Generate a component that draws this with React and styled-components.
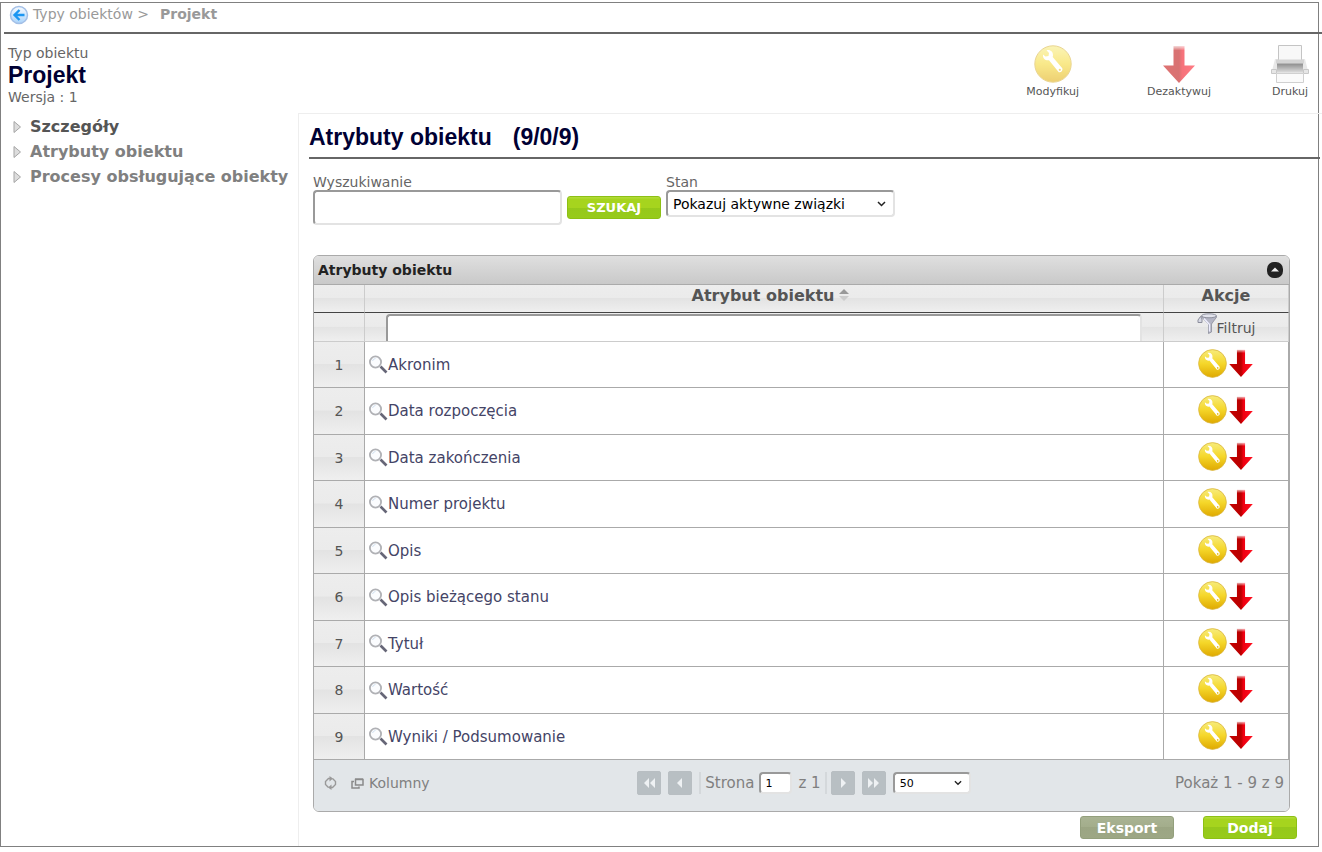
import React, { useState } from 'react'
import styled, { createGlobalStyle } from 'styled-components'

const GlobalStyle = createGlobalStyle`
  * {
    box-sizing: border-box;
  }
  body {
    margin: 0;
    overflow-x: hidden;
    background-color: #fff;
    color: #666;
    font-family: "DejaVu Sans", Verdana, sans-serif;
    font-size: 14px;
  }
  button,
  input,
  select {
    font-family: inherit;
  }
`

const Frame = styled.div`
  margin: 2px 3px 5px 0;
  border: 1px solid #808080;
`

const Breadcrumb = styled.nav`
  display: flex;
  align-items: center;
  height: 31px;
  margin: 0 -4px 0 3px;
  padding: 0 5px 8px;
  border-bottom: 2px solid #666;
  color: #999;
`

const CrumbLink = styled.a`
  display: flex;
  align-items: center;
  gap: 4px;
  color: inherit;
  text-decoration: none;

  svg {
    margin-top: 3px;
  }
`

const Current = styled.strong`
  margin-left: 11px;
`

const Header = styled.header`
  display: flex;
  justify-content: space-between;
  height: 79px;
  padding: 10px 9px 0 7px;
`

const ObjectInfo = styled.div`
  line-height: 18px;
`

const ObjectName = styled.h1`
  margin: 0;
  color: #003;
  font: bold 23px/26px "Liberation Sans", Arial, sans-serif;
`

const Toolbar = styled.div`
  display: flex;
  align-items: flex-start;
`

const Tool = styled.button`
  display: flex;
  flex-direction: column;
  align-items: center;
  gap: 2px;
  margin-left: ${({ $gap }) => $gap || 0}px;
  padding: 1px 0 0;
  border: none;
  background: none;
  color: #555;
  font-size: 11px;
  line-height: 14px;
  cursor: pointer;

  svg {
    opacity: ${({ $faded }) => ($faded ? 0.55 : 1)};
  }
`

const Columns = styled.div`
  display: flex;
`

const Menu = styled.nav`
  flex: 0 0 297px;
  padding-top: 1px;
`

const MenuLink = styled.a`
  display: flex;
  align-items: center;
  gap: 8px;
  height: 25px;
  padding-left: 11px;
  color: ${({ $active }) => ($active ? '#555' : '#808080')};
  font-size: 16px;
  font-weight: bold;
  text-decoration: none;
  white-space: nowrap;
`

const Main = styled.main`
  flex: 1;
  min-width: 0;
  margin-right: -4px;
  padding: 0 2px 7px 10px;
  border-top: 1px solid #eee;
  border-left: 1px solid #eee;
`

const Title = styled.h2`
  display: flex;
  gap: 21px;
  margin: 0;
  padding: 10px 0 6px;
  border-bottom: 2px solid #666;
  color: #003;
  font: bold 23px/27px "Liberation Sans", Arial, sans-serif;
`

const Content = styled.div`
  padding: 15px 30px 0 4px;
`

const SearchForm = styled.form`
  display: flex;
  gap: 5px;
  align-items: flex-start;
`

const Field = styled.label`
  display: flex;
  flex-direction: column;
  width: ${({ $width }) => $width}px;
  line-height: 16px;
`

const inset = `
  border: 2px solid;
  border-color: #999 #e3e3e3 #e3e3e3 #999;
  border-radius: 4px;
  background-color: #fff;
  color: #000;
`

const TextInput = styled.input`
  ${inset}
  height: 35px;
  padding: 0 6px;
  font-size: 14px;
`

const SelectBox = styled.span`
  display: inline-grid;
  align-items: center;

  select,
  svg {
    grid-area: 1 / 1;
  }
  svg {
    justify-self: end;
    margin-right: 9px;
    pointer-events: none;
  }
`

const Select = styled.select`
  ${inset}
  appearance: none;
  width: ${({ $width }) => $width};
  height: ${({ $height }) => $height}px;
  padding: 0 5px;
  font-size: ${({ $size }) => $size}px;
`

const Button = styled.button`
  width: 94px;
  height: 23px;
  padding: 0;
  border: 1px solid ${({ $grey }) => ($grey ? '#939f7c' : '#8dc015')};
  border-radius: 3px;
  background: ${({ $grey }) =>
    $grey
      ? 'linear-gradient(#a9b393, #a3ad8b 50%, #9ba583 50%, #9da785)'
      : 'linear-gradient(#b3dc3c, #a6d41e 12%, #a6d41e 50%, #95c81b 50%, #97cb1a)'};
  color: #fff;
  font-size: ${({ $small }) => ($small ? 13 : 14)}px;
  font-weight: bold;
  line-height: 20px;
  cursor: pointer;
`

const SearchButton = styled(Button)`
  margin-top: 22px;
`

const Grid = styled.section`
  margin-top: 30px;
  border: 1px solid #aaa;
  border-radius: 6px;
  overflow: hidden;
`

const GridTitle = styled.div`
  display: flex;
  align-items: center;
  justify-content: space-between;
  height: 29px;
  padding: 0 6px 0 4px;
  border-bottom: 1px solid #aaa;
  background: linear-gradient(#dfdfdf, #c9c9c9);
  color: #222;
  font-weight: bold;
`

const IconButton = styled.button`
  display: flex;
  align-items: center;
  gap: 5px;
  padding: 0;
  border: none;
  background: none;
  color: inherit;
  font-size: inherit;
  cursor: pointer;
`

const Table = styled.table`
  width: 100%;
  table-layout: fixed;
  border-collapse: separate;
  border-spacing: 0;
`

const shade = 'linear-gradient(#ededed, #ebebeb 48%, #e3e3e3 50%, #efefef)'

const HeadCell = styled.th`
  width: ${({ $width }) => $width || 'auto'};
  height: 28px;
  padding: 0 0 6px ${({ $sortable }) => ($sortable ? 13 : 0)}px;
  border-right: 1px solid #ccc;
  border-bottom: 1px solid #444;
  background: ${shade};
  color: #555;
  font-size: 16px;
  line-height: 20px;

  svg {
    margin-left: 5px;
  }
`

const FilterCell = styled.td`
  height: 29px;
  padding: 0;
  border-right: 1px solid #ccc;
  border-bottom: 1px solid #ccc;
  background: ${shade};
  vertical-align: top;
  text-align: center;
`

const FilterInput = styled.input`
  ${inset}
  display: block;
  width: calc(100% - 42px);
  height: 27px;
  margin: 1px auto 0;
  border-bottom: none;
  border-radius: 4px 4px 0 0;
  font-size: 14px;
`

const FilterButton = styled(IconButton)`
  gap: 0;
  height: 27px;
  margin: 0 auto;
  color: #555;

  svg {
    align-self: flex-start;
  }
  span {
    padding-top: 2px;
  }
`

const Row = styled.tr`
  height: 46px;

  &:nth-child(even) {
    height: 47px;
  }
`

const Cell = styled.td`
  padding: 0;
  border-right: 1px solid #aaa;
  border-bottom: 1px solid #aaa;
  color: #446;
`

const NumberCell = styled(Cell)`
  background: ${shade};
  color: #555;
  text-align: center;
`

const NameLink = styled.a`
  display: flex;
  align-items: center;
  padding-left: 4px;
  color: #446;
  font-size: 15px;
  text-decoration: none;
`

const Actions = styled.div`
  display: flex;
  justify-content: center;
  align-items: center;
  padding-bottom: 3px;
`

const Pager = styled.div`
  display: grid;
  grid-template-columns: 1fr auto 1fr;
  align-items: center;
  height: 51px;
  padding: 0 5px 5px 10px;
  background-color: #e2e6e9;
  color: #808080;
`

const PagerLeft = styled.div`
  display: flex;
  gap: 14px;
`

const PagerCenter = styled.div`
  display: flex;
  align-items: center;
  font-size: 15px;
`

const PageButton = styled.button`
  display: flex;
  align-items: center;
  justify-content: center;
  width: 24px;
  height: 24px;
  margin-right: 7px;
  padding: 0;
  border: 1px solid #b8bec2;
  border-radius: 2px;
  background-color: #b8bfc3;
`

const Separator = styled.span`
  width: 2px;
  height: 22px;
  margin-right: 4px;
  background-color: #d4d8db;
`

const PageLabel = styled.label`
  display: flex;
  align-items: center;
  gap: 5px;
`

const PageInput = styled.input`
  ${inset}
  width: 33px;
  height: 22px;
  margin-right: 6px;
  padding: 0 4px;
  font-size: 11px;
`

const PageCount = styled.span`
  margin-right: 4px;
`

const Summary = styled.span`
  justify-self: end;
  font-size: 15px;
`

const Footer = styled.div`
  display: flex;
  justify-content: flex-end;
  gap: 29px;
  margin: 4px -7px 0 0;
`

const BackIcon = () => (
  <svg width="20" height="20" viewBox="0 0 20 20">
    <defs>
      <linearGradient id="back" x2="0" y2="1">
        <stop offset="0" stopColor="#f8fbff" />
        <stop offset="1" stopColor="#a9d3fa" />
      </linearGradient>
    </defs>
    <circle cx="10" cy="10" r="8.5" fill="url(#back)" stroke="#a3bfe6" strokeWidth="1.5" />
    <path d="M10.5 5 5.5 10l5 5M6 10h9.5" fill="none" stroke="#1c96f2" strokeWidth="2.4" />
  </svg>
)

const WrenchIcon = ({ size }) => (
  <svg width={size} height={size} viewBox="0 0 38 38">
    <defs>
      <linearGradient id="gold" x2="0" y2="1">
        <stop offset="0" stopColor="#f7ec7c" />
        <stop offset=".5" stopColor="#f5d72a" />
        <stop offset="1" stopColor="#dfa900" />
      </linearGradient>
    </defs>
    <circle cx="19" cy="19" r="18.2" fill="url(#gold)" stroke="#d9b43c" />
    <path
      d="M12.500 5.200C16 4 19.300 6.500 19 10.500L18.700 12 28.300 23.200C29 25.500 27.500 27.600 24.800 27.200L15 15.200C11.500 15.800 8.500 13.500 9 9.500L11.500 11.500 14.500 11 15 8z"
      fill="#fff"
    />
    <circle cx="25.800" cy="24.800" r="1.100" fill="#e5bd1a" />
  </svg>
)

const DownIcon = ({ width, height }) => (
  <svg width={width} height={height} viewBox="0 0 32 38">
    <defs>
      <linearGradient id="red">
        <stop offset="0" stopColor="#c60000" />
        <stop offset=".5" stopColor="#b80000" />
        <stop offset=".6" stopColor="#ef0010" />
        <stop offset="1" stopColor="#ff1020" />
      </linearGradient>
      <linearGradient id="fade" x2="0" y2="1">
        <stop offset="0" stopColor="#fff" stopOpacity=".9" />
        <stop offset=".25" stopColor="#fff" stopOpacity="0" />
      </linearGradient>
    </defs>
    <path d="M10.500 1h11v19.500H32L16 38 0 20.500h10.500z" fill="url(#red)" />
    <path d="M10 0h12v22H10z" fill="url(#fade)" />
  </svg>
)

const PrinterIcon = () => (
  <svg width="38" height="38" viewBox="0 0 38 38">
    <defs>
      <linearGradient id="printer" x2="0" y2="1">
        <stop offset="0" stopColor="#8c8c8c" />
        <stop offset="1" stopColor="#ddd" />
      </linearGradient>
    </defs>
    <path d="M4 14h30l2.500 10v4h-35v-4z" fill="#e8e8e8" />
    <path d="M7.500.5h23V17h-23z" fill="#f8f8f8" stroke="#c4c4c4" />
    <path d="M5 14.500h28v4H5z" fill="#d4d4d4" />
    <path d="M6 18.500h26v9H6z" fill="url(#printer)" />
    <path d="M.5 24.500h5v4h-5zM32.500 24.500h5v4h-5z" fill="#e6e6e6" stroke="#c8c8c8" />
    <path d="M5.500 28.500h27v9h-27z" fill="#fafafa" stroke="#d0d0d0" />
  </svg>
)

const MenuArrow = () => (
  <svg width="10" height="14" viewBox="0 0 10 14">
    <path d="M2 1.500v11L8.500 7z" fill="#ddd" stroke="#a5a5a5" />
  </svg>
)

const LoupeIcon = () => (
  <svg width="19" height="19" viewBox="0 0 19 19">
    <path d="M11.500 11.500l6 6" stroke="#667" strokeWidth="2.600" />
    <circle cx="6.500" cy="7" r="5.600" fill="#fbfcfe" stroke="#b0b1b5" strokeWidth="1.800" />
    <path d="M3.500 6a3.500 3.500 0 0 1 3-2.500" fill="none" stroke="#d0e0f0" />
  </svg>
)

const FunnelIcon = () => (
  <svg width="20" height="22" viewBox="0 0 20 22">
    <path d="M4 3.500h16l-5.500 7.500v8l-3 1.500V11z" fill="#b4b5c4" stroke="#8c8e9c" strokeWidth=".8" />
    <path d="M7 5.500l5.500 6v7" fill="none" stroke="#eef" strokeWidth="1.400" />
    <ellipse cx="12" cy="2.800" rx="7.500" ry="2" fill="#e2e3ec" stroke="#8c8e9c" />
    <path d="M3.500 3.500 1 7v2.500h4V6z" fill="#d6d8e4" stroke="#8c8e9c" />
  </svg>
)

const CollapseIcon = () => (
  <svg width="16" height="16" viewBox="0 0 16 16">
    <rect width="16" height="16" rx="7" fill="#222" />
    <path d="M4 9.500 8 5.500l4 4z" fill="#eee" />
  </svg>
)

const SortIcon = () => (
  <svg width="10" height="12" viewBox="0 0 10 12">
    <path d="M0 5 5 0l5 5z" fill="#999" />
    <path d="M0 7h10l-5 5z" fill="#ccc" />
  </svg>
)

const Chevron = ({ size }) => (
  <svg width={size} height="6" viewBox="0 0 9 6">
    <path d="M1 1l3.500 3.500L8 1" fill="none" stroke="#222" strokeWidth="1.500" />
  </svg>
)

const RefreshIcon = () => (
  <svg width="13" height="14" viewBox="0 0 13 14">
    <path d="M4.500 11.500 1.500 8.500v-3l3-3H7M8.500 2.500l3 3v3l-3 3H6" fill="none" stroke="#999" strokeWidth="1.400" />
    <path d="M5.500 0 9 2.500 5.500 5.500zM7.500 8.500 4 11.500 7.500 14z" fill="#999" />
  </svg>
)

const WindowsIcon = () => (
  <svg width="13" height="12" viewBox="0 0 13 12">
    <path
      d="M4.500 2.500h7.500v5.500H4.500zM4 2h8M3 4.500H1v6.500h7V9.500"
      fill="none"
      stroke="#8a8a8a"
      strokeWidth="1.500"
    />
  </svg>
)

const PageArrow = ({ double, flip }) => (
  <svg width="12" height="12" viewBox="0 0 12 12" transform={flip ? 'rotate(180)' : undefined}>
    <path d={double ? 'M6 1v10L1 6zM12 1v10L7 6z' : 'M8 1v10L3 6z'} fill="#eef1f3" />
  </svg>
)

const menu = ['Szczegóły', 'Atrybuty obiektu', 'Procesy obsługujące obiekty']

const attributes = [
  'Akronim',
  'Data rozpoczęcia',
  'Data zakończenia',
  'Numer projektu',
  'Opis',
  'Opis bieżącego stanu',
  'Tytuł',
  'Wartość',
  'Wyniki / Podsumowanie',
]

const App = () => {
  const [search, setSearch] = useState('')
  const [filter, setFilter] = useState('')
  const [page, setPage] = useState('1')

  return (
    <>
      <GlobalStyle />
      <Frame>
        <Breadcrumb>
          <CrumbLink href="#types">
            <BackIcon />
            Typy obiektów &gt;
          </CrumbLink>
          <Current>Projekt</Current>
        </Breadcrumb>
        <Header>
          <ObjectInfo>
            Typ obiektu
            <ObjectName>Projekt</ObjectName>
            Wersja : 1
          </ObjectInfo>
          <Toolbar>
            <Tool $faded>
              <WrenchIcon size={38} />
              Modyfikuj
            </Tool>
            <Tool $faded $gap={68}>
              <DownIcon width={32} height={38} />
              Dezaktywuj
            </Tool>
            <Tool $gap={60}>
              <PrinterIcon />
              Drukuj
            </Tool>
          </Toolbar>
        </Header>
        <Columns>
          <Menu>
            {menu.map((item, i) => (
              <MenuLink key={item} href={`#menu-${i}`} $active={i === 0}>
                <MenuArrow />
                {item}
              </MenuLink>
            ))}
          </Menu>
          <Main>
            <Title>
              <span>Atrybuty obiektu</span>
              <span>(9/0/9)</span>
            </Title>
            <Content>
              <SearchForm onSubmit={(e) => e.preventDefault()}>
                <Field $width={249}>
                  Wyszukiwanie
                  <TextInput value={search} onChange={(e) => setSearch(e.target.value)} />
                </Field>
                <SearchButton $small>SZUKAJ</SearchButton>
                <Field $width={229}>
                  Stan
                  <SelectBox>
                    <Select $width="100%" $height={27} $size={14}>
                      <option>Pokazuj aktywne związki</option>
                    </Select>
                    <Chevron size={9} />
                  </SelectBox>
                </Field>
              </SearchForm>
              <Grid>
                <GridTitle>
                  Atrybuty obiektu
                  <IconButton aria-label="Zwiń">
                    <CollapseIcon />
                  </IconButton>
                </GridTitle>
                <Table>
                  <thead>
                    <tr>
                      <HeadCell $width="51px" />
                      <HeadCell $sortable>
                        Atrybut obiektu
                        <SortIcon />
                      </HeadCell>
                      <HeadCell $width="125px">Akcje</HeadCell>
                    </tr>
                    <tr>
                      <FilterCell />
                      <FilterCell>
                        <FilterInput
                          aria-label="Atrybut obiektu"
                          value={filter}
                          onChange={(e) => setFilter(e.target.value)}
                        />
                      </FilterCell>
                      <FilterCell>
                        <FilterButton>
                          <FunnelIcon />
                          <span>Filtruj</span>
                        </FilterButton>
                      </FilterCell>
                    </tr>
                  </thead>
                  <tbody>
                    {attributes.map((name, i) => (
                      <Row key={name}>
                        <NumberCell>{i + 1}</NumberCell>
                        <Cell>
                          <NameLink href={`#attribute-${i + 1}`}>
                            <LoupeIcon />
                            {name}
                          </NameLink>
                        </Cell>
                        <Cell>
                          <Actions>
                            <IconButton aria-label="Modyfikuj">
                              <WrenchIcon size={29} />
                            </IconButton>
                            <IconButton aria-label="Dezaktywuj">
                              <DownIcon width={28} height={28} />
                            </IconButton>
                          </Actions>
                        </Cell>
                      </Row>
                    ))}
                  </tbody>
                </Table>
                <Pager>
                  <PagerLeft>
                    <IconButton aria-label="Odśwież">
                      <RefreshIcon />
                    </IconButton>
                    <IconButton>
                      <WindowsIcon />
                      Kolumny
                    </IconButton>
                  </PagerLeft>
                  <PagerCenter>
                    <PageButton aria-label="Pierwsza">
                      <PageArrow double />
                    </PageButton>
                    <PageButton aria-label="Poprzednia">
                      <PageArrow />
                    </PageButton>
                    <Separator />
                    <PageLabel>
                      Strona
                      <PageInput value={page} onChange={(e) => setPage(e.target.value)} />
                    </PageLabel>
                    <PageCount>z 1</PageCount>
                    <Separator />
                    <PageButton aria-label="Następna">
                      <PageArrow flip />
                    </PageButton>
                    <PageButton aria-label="Ostatnia">
                      <PageArrow double flip />
                    </PageButton>
                    <SelectBox>
                      <Select aria-label="Wierszy na stronie" $width="78px" $height={22} $size={11}>
                        <option>50</option>
                      </Select>
                      <Chevron size={8} />
                    </SelectBox>
                  </PagerCenter>
                  <Summary>Pokaż 1 - 9 z 9</Summary>
                </Pager>
              </Grid>
              <Footer>
                <Button $grey>Eksport</Button>
                <Button>Dodaj</Button>
              </Footer>
            </Content>
          </Main>
        </Columns>
      </Frame>
    </>
  )
}

export default App
